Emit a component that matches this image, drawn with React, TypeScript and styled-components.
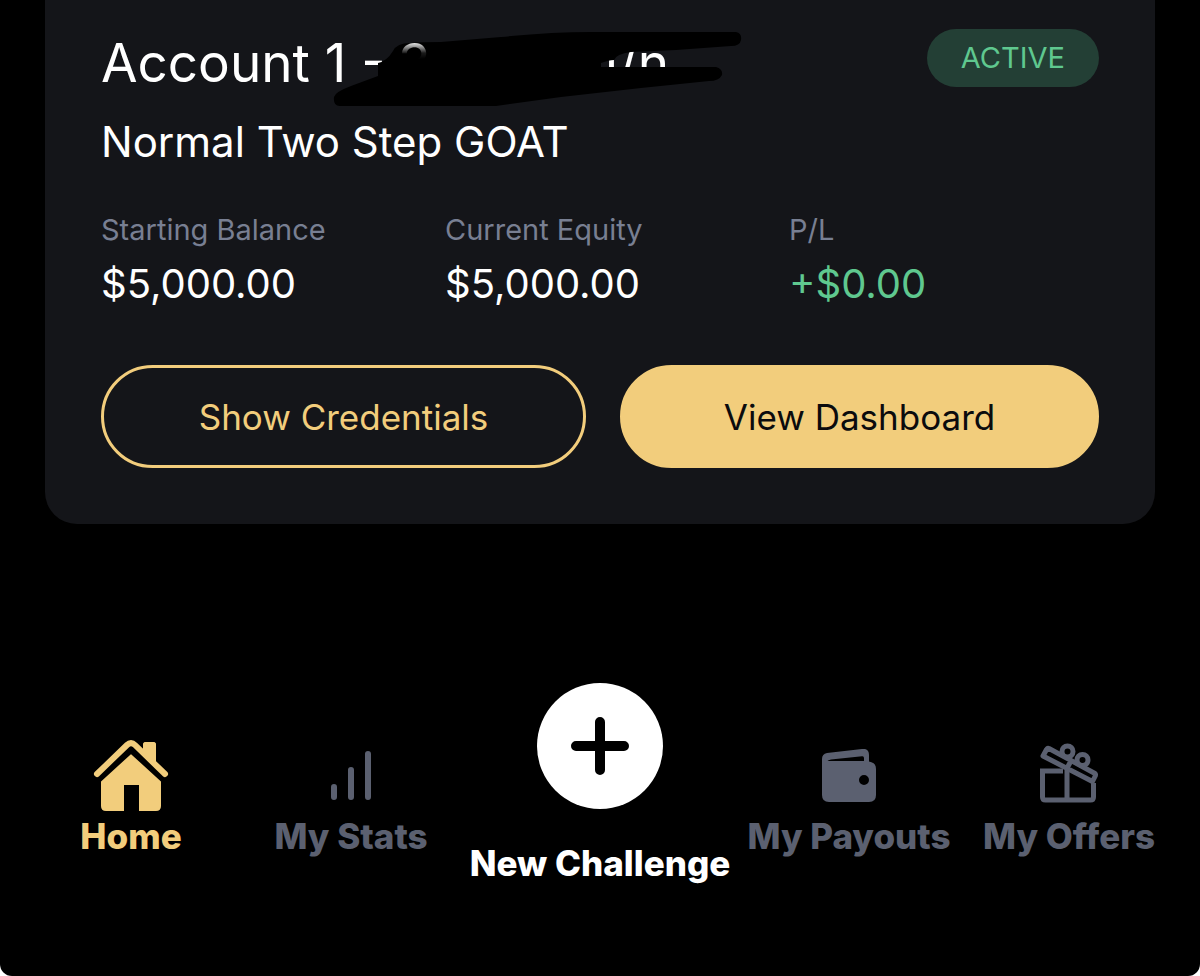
import React from "react";
import styled, { createGlobalStyle } from "styled-components";

const GlobalStyle = createGlobalStyle`
  *, *::before, *::after { box-sizing: border-box; }
  body { margin: 0; background: #ffffff; font-family: Inter, sans-serif; }
`;

const Screen = styled.main`
  display: flex;
  flex-direction: column;
  justify-content: space-between;
  min-height: 100vh;
  background: #000000;
  border-radius: 0 0 12px 12px;
`;

const Card = styled.section`
  display: flex;
  flex-direction: column;
  margin: 0 45px;
  padding: 29px 56px 56px;
  background: #141519;
  border-radius: 0 0 32px 32px;
`;

const CardHeader = styled.header`
  display: flex;
  justify-content: space-between;
  align-items: flex-start;
`;

const Title = styled.h1`
  position: relative;
  margin: 0;
  font-size: 53px;
  font-weight: 400;
  line-height: 68px;
  color: #ffffff;
  white-space: nowrap;
`;

const Fragment = styled.span<{ $left: number; $faded?: boolean }>`
  position: absolute;
  top: 0;
  left: ${(p) => p.$left}px;
  z-index: ${(p) => (p.$faded ? 1 : 0)};
  mask-image: ${(p) =>
    p.$faded ? "linear-gradient(rgba(0,0,0,0.9) 14px, rgba(0,0,0,0.1) 24px, transparent 30px)" : "none"};
`;

const Scribble = styled.svg`
  position: absolute;
  top: 0;
  left: 230px;
`;

const Badge = styled.span`
  padding: 0 34px;
  border-radius: 29px;
  background: #233f35;
  color: #5fc88f;
  font-size: 29px;
  line-height: 58px;
`;

const Plan = styled.p`
  margin: 19px 0 0;
  font-size: 42px;
  line-height: 52px;
  color: #ffffff;
`;

const Figures = styled.dl`
  display: grid;
  grid-template-columns: repeat(3, 1fr);
  gap: 34px;
  margin: 43px 0 0;
`;

const FigureLabel = styled.dt`
  font-size: 29px;
  line-height: 38px;
  color: #787f92;
  white-space: nowrap;
`;

const FigureValue = styled.dd<{ $gain?: boolean }>`
  margin: 9px 0 0;
  font-size: 40px;
  line-height: 52px;
  color: ${(p) => (p.$gain ? "#5fc88f" : "#ffffff")};
`;

const Actions = styled.div`
  display: flex;
  gap: 34px;
  margin-top: 55px;
`;

const ActionButton = styled.button<{ $filled?: boolean }>`
  flex: ${(p) => (p.$filled ? 479 : 485)} 1 0;
  height: 103px;
  padding: 0;
  border: 3px solid #f2cd7c;
  border-radius: 52px;
  background: ${(p) => (p.$filled ? "#f2cd7c" : "transparent")};
  color: ${(p) => (p.$filled ? "#0b0b0d" : "#f2cd7c")};
  font: 400 35px/44px Inter, sans-serif;
`;

const TabBar = styled.nav`
  display: grid;
  grid-template-columns: 1fr 1fr 278px 1fr 1fr;
  align-items: start;
  padding: 0 21px 93px;
`;

const Tab = styled.a<{ $color: string; $raised?: boolean }>`
  display: flex;
  flex-direction: column;
  align-items: center;
  gap: ${(p) => (p.$raised ? 34 : 4)}px;
  margin-top: ${(p) => (p.$raised ? 0 : 57)}px;
  color: ${(p) => p.$color};
  font-size: 35px;
  font-weight: 800;
  line-height: 40px;
  white-space: nowrap;
  text-decoration: none;
`;

const IconBox = styled.span`
  display: flex;
  align-items: center;
  justify-content: center;
  height: 72px;
`;

const PlusCircle = styled.span`
  display: flex;
  align-items: center;
  justify-content: center;
  width: 126px;
  height: 126px;
  border-radius: 50%;
  background: #ffffff;
`;

const HomeIcon = () => (
  <svg width="76" height="72" viewBox="0 0 76 72" aria-hidden="true">
    <path d="M50 18V5q0-3 3-3h7q3 0 3 3v26z" fill="currentColor" />
    <path d="M8 39L38 10L68 39V66q0 5-5 5H46V45H31V71H13q-5 0-5-5z" fill="currentColor" />
    <path d="M4 37L38 6L72 37" fill="none" stroke="#000" strokeWidth="12" />
    <path d="M4 34L34 5q4-4 8 0L72 34" fill="none" stroke="currentColor" strokeWidth="6" strokeLinecap="round" />
    <path d="M50 11V5q0-3 3-3h7q3 0 3 3v19z" fill="currentColor" />
  </svg>
);

const StatsIcon = () => (
  <svg width="40" height="52" viewBox="0 0 40 52" aria-hidden="true">
    <path d="M3 37V47M20 20V47M37 4V47" stroke="currentColor" strokeWidth="6" strokeLinecap="round" />
  </svg>
);

const PlusIcon = () => (
  <svg width="60" height="60" viewBox="0 0 60 60" aria-hidden="true">
    <path d="M30 6V54M6 30H54" stroke="#000" strokeWidth="10" strokeLinecap="round" />
  </svg>
);

const WalletIcon = () => (
  <svg width="54" height="54" viewBox="0 0 54 54" aria-hidden="true">
    <path
      fill="currentColor"
      fillRule="evenodd"
      d="M0 10Q0 5 5 4L40 0Q47-1 47 6V12.500Q54 13.500 54 20V46Q54 53 47 53H7Q0 53 0 46ZM5.500 12H42V9Q42 7 40 7.300L9 10.500Q6 11 5.500 12ZM42 26a5 5 0 1 0 0 10a5 5 0 1 0 0-10Z"
    />
  </svg>
);

const GiftIcon = () => (
  <svg width="60" height="66" viewBox="0 0 60 66" fill="none" stroke="currentColor" strokeWidth="5" aria-hidden="true">
    <path d="M24 28H3.500V54q0 3 3 3H51.500q3 0 3-3V40M28 27V57" />
    <path d="M10 5.500L56 30.500q1 1 0 3L53.500 38.500L4 13L7.500 6.500q1-2 2.500-1zM32.500 17l-5 9" strokeLinejoin="round" />
    <circle cx="28.500" cy="8.500" r="5.500" />
    <circle cx="43.500" cy="17" r="5.500" />
  </svg>
);

export default function App() {
  return (
    <>
      <GlobalStyle />
      <Screen>
        <Card>
          <CardHeader>
            <Title>
              Account 1 -
              <Fragment $left={297} $faded>3</Fragment>
              <Fragment $left={496}>1/n</Fragment>
              <Scribble width="414" height="84" viewBox="0 0 414 84" aria-hidden="true">
                <path
                  fill="#000"
                  d="M62 22Q66 14 79 14Q92 13 110 13L170 8Q220 3 260 3H405Q411 4 410 11Q409 17 400 17L345 21L300 23Q285 25 283 31Q278 31 270 34V38H385Q392 40 391 46Q388 52 378 52L310 59L230 68L165 77H10Q2 78 3 68Q4 63 20 57L47 47V34Q56 32 62 22Z"
                />
              </Scribble>
            </Title>
            <Badge>ACTIVE</Badge>
          </CardHeader>
          <Plan>Normal Two Step GOAT</Plan>
          <Figures>
            <div>
              <FigureLabel>Starting Balance</FigureLabel>
              <FigureValue>$5,000.00</FigureValue>
            </div>
            <div>
              <FigureLabel>Current Equity</FigureLabel>
              <FigureValue>$5,000.00</FigureValue>
            </div>
            <div>
              <FigureLabel>P/L</FigureLabel>
              <FigureValue $gain>+$0.00</FigureValue>
            </div>
          </Figures>
          <Actions>
            <ActionButton type="button">Show Credentials</ActionButton>
            <ActionButton type="button" $filled>View Dashboard</ActionButton>
          </Actions>
        </Card>
        <TabBar>
          <Tab href="#home" $color="#f2cd7c" aria-current="page">
            <IconBox><HomeIcon /></IconBox>
            Home
          </Tab>
          <Tab href="#stats" $color="#5b6070">
            <IconBox><StatsIcon /></IconBox>
            My Stats
          </Tab>
          <Tab href="#new" $color="#ffffff" $raised>
            <PlusCircle><PlusIcon /></PlusCircle>
            New Challenge
          </Tab>
          <Tab href="#payouts" $color="#5b6070">
            <IconBox><WalletIcon /></IconBox>
            My Payouts
          </Tab>
          <Tab href="#offers" $color="#5b6070">
            <IconBox><GiftIcon /></IconBox>
            My Offers
          </Tab>
        </TabBar>
      </Screen>
    </>
  );
}
